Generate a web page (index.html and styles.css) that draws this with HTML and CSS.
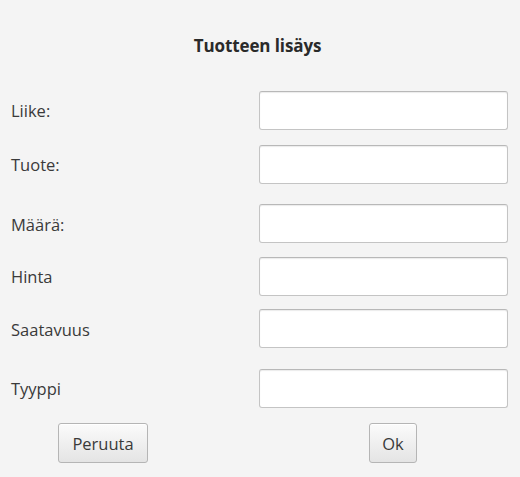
FILE: index.html
```html
<!DOCTYPE html>
<html lang="fi">
<head>
<meta charset="utf-8">
<title>Tuotteen lisäys</title>
<link rel="stylesheet" href="styles.css">
</head>
<body>
<div class="dialog">
  <h1 class="title">Tuotteen lisäys</h1>
  <div class="form">
    <div class="row r1"><label class="label">Liike:</label><input class="field" type="text"></div>
    <div class="row r2"><label class="label">Tuote:</label><input class="field" type="text"></div>
    <div class="row r3"><label class="label lower">Määrä:</label><input class="field" type="text"></div>
    <div class="row r4"><label class="label">Hinta</label><input class="field" type="text"></div>
    <div class="row r5"><label class="label lower">Saatavuus</label><input class="field" type="text"></div>
    <div class="row r6"><label class="label">Tyyppi</label><input class="field" type="text"></div>
  </div>
  <div class="buttons">
    <button class="btn cancel">Peruuta</button>
    <button class="btn ok">Ok</button>
  </div>
</div>
</body>
</html>
```
FILE: styles.css
```css
* { box-sizing: border-box; }
html, body {
  margin: 0;
  padding: 0;
  background: #f4f4f4;
}
body {
  width: 520px;
  height: 477px;
  font-family: "Open Sans", "Noto Sans", sans-serif;
  color: #333;
  overflow: hidden;
}
.dialog {
  padding-top: 35px;
}
.title {
  margin: 0;
  padding-right: 5px;
  font-size: 17px;
  font-weight: 700;
  line-height: 22px;
  text-align: center;
  color: #2a2a2a;
  letter-spacing: -0.1px;
}
.form {
  margin-top: 34px;
  display: flex;
  flex-direction: column;
}
.row {
  display: flex;
  align-items: flex-start;
  padding-left: 11px;
}
.r1 { height: 54px; }
.r2 { height: 59px; }
.r3 { height: 53px; }
.r4 { height: 52px; }
.r5 { height: 60px; }
.r6 { height: 39px; }
.label {
  width: 248px;
  height: 39px;
  line-height: 39px;
  font-size: 16.5px;
  color: #3a3a3a;
}
.label.lower { line-height: 42px; }
.field {
  width: 249px;
  height: 39px;
  margin: 0;
  border: 1px solid #c4c4c4;
  border-top-color: #b8b8b8;
  border-radius: 3px;
  background: #fff;
  box-shadow: inset 0 1px 1px rgba(0,0,0,0.08);
  font: inherit;
  outline: none;
}
.buttons {
  margin-top: 15px;
  display: flex;
  align-items: flex-start;
  padding-left: 58px;
}
.btn {
  height: 40px;
  font-family: "Open Sans", "Noto Sans", sans-serif;
  font-size: 16.5px;
  color: #3a3a3a;
  border: 1px solid #b5b5b5;
  border-radius: 3px;
  background: linear-gradient(#fbfbfb, #e4e4e4);
  box-shadow: inset 0 1px 0 #fff;
  padding: 0;
}
.cancel { width: 90px; }
.ok { width: 48px; margin-left: 221px; }
```
